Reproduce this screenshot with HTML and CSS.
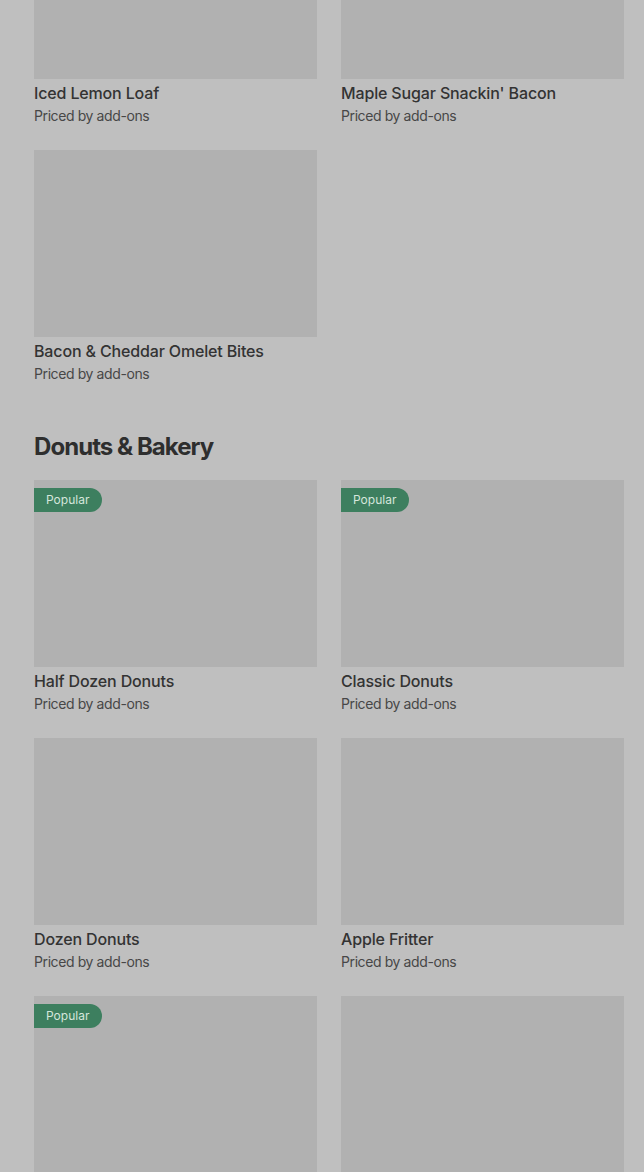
FILE: index.html
```html
<!DOCTYPE html>
<html lang="en">
<head>
<meta charset="utf-8">
<link rel="stylesheet" href="styles.css">
</head>
<body>
<main class="page">
  <section class="section first">
    <div class="grid">
      <div class="card">
        <div class="thumb"></div>
        <div class="name">Iced Lemon Loaf</div>
        <div class="price">Priced by add-ons</div>
      </div>
      <div class="card">
        <div class="thumb"></div>
        <div class="name">Maple Sugar Snackin' Bacon</div>
        <div class="price">Priced by add-ons</div>
      </div>
      <div class="card">
        <div class="thumb"></div>
        <div class="name">Bacon &amp; Cheddar Omelet Bites</div>
        <div class="price">Priced by add-ons</div>
      </div>
    </div>
  </section>
  <section class="section">
    <h2 class="heading">Donuts &amp; Bakery</h2>
    <div class="grid">
      <div class="card">
        <div class="thumb"><span class="badge">Popular</span></div>
        <div class="name">Half Dozen Donuts</div>
        <div class="price">Priced by add-ons</div>
      </div>
      <div class="card">
        <div class="thumb"><span class="badge">Popular</span></div>
        <div class="name">Classic Donuts</div>
        <div class="price">Priced by add-ons</div>
      </div>
      <div class="card">
        <div class="thumb"></div>
        <div class="name">Dozen Donuts</div>
        <div class="price">Priced by add-ons</div>
      </div>
      <div class="card">
        <div class="thumb"></div>
        <div class="name">Apple Fritter</div>
        <div class="price">Priced by add-ons</div>
      </div>
      <div class="card">
        <div class="thumb"><span class="badge">Popular</span></div>
      </div>
      <div class="card">
        <div class="thumb"></div>
      </div>
    </div>
  </section>
</main>
</body>
</html>
```

FILE: styles.css
```css
html, body {
  margin: 0;
  padding: 0;
  background: #bfbfbf;
  overflow: hidden;
}
body {
  font-family: "Inter", "Roboto", "Liberation Sans", sans-serif;
  color: #333333;
}
.page {
  padding: 0 20px 0 34px;
  height: 1172px;
  overflow: hidden;
}
.section.first {
  margin-top: -108px;
}
.grid {
  display: grid;
  grid-template-columns: 283px 283px;
  column-gap: 24px;
  row-gap: 24px;
}
.card {
  display: flex;
  flex-direction: column;
}
.thumb {
  position: relative;
  height: 187px;
  background: #b1b1b1;
}
.badge {
  position: absolute;
  left: 0;
  top: 8px;
  height: 24px;
  width: 68px;
  box-sizing: border-box;
  padding-left: 12px;
  background: #3d7f5f;
  color: #d5e6dc;
  font-size: 12px;
  line-height: 24px;
  border-radius: 0 12px 12px 0;
}
.name {
  margin-top: 4px;
  font-size: 16px;
  line-height: 20px;
  font-weight: 500;
  letter-spacing: -0.15px;
  color: #333333;
}
.price {
  margin-top: 3px;
  font-size: 14px;
  line-height: 20px;
  letter-spacing: -0.4px;
  color: #474747;
}
.heading {
  margin: 47px 0 17px;
  font-size: 24px;
  line-height: 32px;
  font-weight: 700;
  letter-spacing: -0.95px;
  color: #2e2e2e;
}
```
